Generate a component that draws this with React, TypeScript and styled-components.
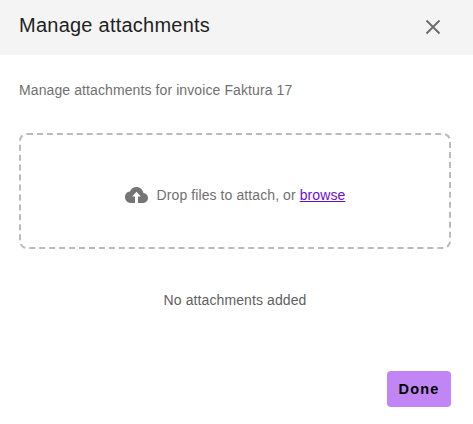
import React from "react";
import styled, { createGlobalStyle } from "styled-components";

const GlobalStyle = createGlobalStyle`
  html, body {
    margin: 0;
    padding: 0;
    background: #fff;
    font-family: "Liberation Sans", Arial, sans-serif;
  }
`;

const Modal = styled.div`
  width: 473px;
  height: 424px;
  display: flex;
  flex-direction: column;
  overflow: hidden;
`;

const Header = styled.div`
  height: 55px;
  background-color: #f4f4f4;
  display: flex;
  justify-content: space-between;
  align-items: flex-start;
  padding: 0 32px 0 19px;
`;

const Title = styled.h2`
  margin: 13px 0 0;
  font-size: 20px;
  line-height: 24px;
  font-weight: 400;
  letter-spacing: 0.24px;
  color: #1f1f1f;
`;

const CloseButton = styled.button`
  margin-top: 19px;
  padding: 0;
  width: 16px;
  height: 16px;
  border: none;
  background: none;
  display: flex;
  color: #6e6e6e;
`;

const Body = styled.div`
  flex: 1;
  display: flex;
  flex-direction: column;
  padding: 27px 22px 17px 19px;
`;

const Description = styled.p`
  margin: 0;
  font-size: 14px;
  line-height: 16px;
  letter-spacing: 0.1px;
  color: #707070;
`;

const DropZone = styled.div`
  margin-top: 35px;
  height: 116px;
  box-sizing: border-box;
  border: 2px dashed #bbbbbb;
  border-radius: 8px;
  padding-top: 8px;
  display: flex;
  align-items: center;
  justify-content: center;
  gap: 9px;
  font-size: 14px;
  letter-spacing: 0.09px;
  color: #707070;
`;

const BrowseLink = styled.a`
  color: #6a0dd8;
  text-decoration: underline;
`;

const EmptyText = styled.p`
  margin: 43px 0 0;
  font-size: 14px;
  line-height: 16px;
  letter-spacing: 0.1px;
  color: #5f5f5f;
  text-align: center;
`;

const Footer = styled.div`
  margin-top: auto;
  display: flex;
  justify-content: flex-end;
`;

const DoneButton = styled.button`
  width: 64px;
  height: 36px;
  border: none;
  border-radius: 4px;
  background-color: #c285f5;
  color: #000;
  font-family: inherit;
  font-size: 14.5px;
  font-weight: 700;
  letter-spacing: 1.2px;
  padding: 0;
`;

const CloseIcon = () => (
  <svg width="16" height="16" viewBox="0 0 16 16" fill="none" stroke="currentColor" strokeWidth="2">
    <path d="M1.5 1.5 14.5 14.5M14.5 1.5 1.5 14.5" />
  </svg>
);

const CloudIcon = () => (
  <svg width="23" height="16" viewBox="0 0 23 16">
    <path
      fill="#757575"
      d="M11.500 0C8.400 0 5.900 1.800 4.900 4.600 2.100 4.900 0 7.200 0 10.100 0 13.300 2.600 16 5.600 16H18c2.800 0 5-2.300 5-5 0-2.700-2-4.800-4.600-5C17.700 2.600 14.900 0 11.500 0Z"
    />
    <path fill="#fff" d="M11.500 4.800 15.800 9.500H13V16H10V9.500H7.200Z" />
  </svg>
);

export default function App() {
  return (
    <Modal>
      <GlobalStyle />
      <Header>
        <Title>Manage attachments</Title>
        <CloseButton aria-label="Close">
          <CloseIcon />
        </CloseButton>
      </Header>
      <Body>
        <Description>Manage attachments for invoice Faktura 17</Description>
        <DropZone>
          <CloudIcon />
          <span>
            Drop files to attach, or <BrowseLink href="#">browse</BrowseLink>
          </span>
        </DropZone>
        <EmptyText>No attachments added</EmptyText>
        <Footer>
          <DoneButton>Done</DoneButton>
        </Footer>
      </Body>
    </Modal>
  );
}
